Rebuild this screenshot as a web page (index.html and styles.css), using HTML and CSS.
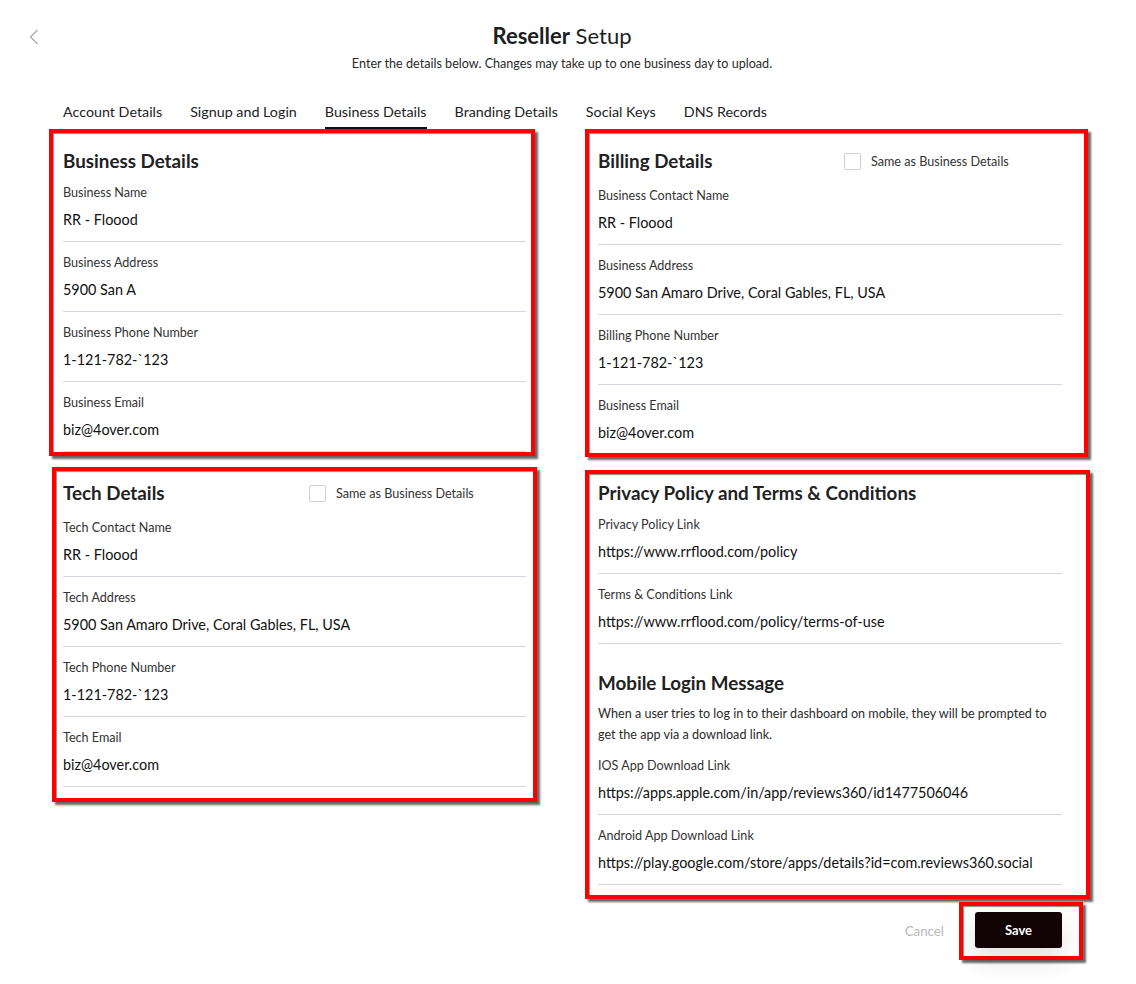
FILE: index.html
```html
<!DOCTYPE html>
<html lang="en">

<head>
    <meta charset="UTF-8">
    <meta name="viewport" content="width=device-width, initial-scale=1.0">
    <title>Reseller Setup</title>
    <link rel="stylesheet" href="styles.css">
</head>

<body>
    <div class="header">
        <a href="javascript:;" class="back">
            <svg width="10" height="16" viewBox="0 0 10 16"><polyline points="8.5,1 1.5,8 8.5,15" fill="none" stroke="#a8a8a8" stroke-width="1.2"/></svg>
        </a>
        <h1 class="title"><b>Reseller</b> Setup</h1>
        <p class="subtitle">Enter the details below. Changes may take up to one business day to upload.</p>
    </div>

    <ul class="tabs">
        <li>Account Details</li>
        <li>Signup and Login</li>
        <li class="current">Business Details</li>
        <li>Branding Details</li>
        <li>Social Keys</li>
        <li>DNS Records</li>
    </ul>

    <div class="main">
        <div class="col-left">
            <div class="box box-business">
                <h2 class="box-title">Business Details</h2>
                <div class="field">
                    <label>Business Name</label>
                    <div class="value">RR - Floood</div>
                </div>
                <div class="field">
                    <label>Business Address</label>
                    <div class="value">5900 San A</div>
                </div>
                <div class="field">
                    <label>Business Phone Number</label>
                    <div class="value">1-121-782-`123</div>
                </div>
                <div class="field">
                    <label>Business Email</label>
                    <div class="value">biz@4over.com</div>
                </div>
            </div>

            <div class="box box-tech">
                <div class="box-head">
                    <h2 class="box-title">Tech Details</h2>
                    <span class="check"><i></i>Same as Business Details</span>
                </div>
                <div class="field">
                    <label>Tech Contact Name</label>
                    <div class="value">RR - Floood</div>
                </div>
                <div class="field">
                    <label>Tech Address</label>
                    <div class="value">5900 San Amaro Drive, Coral Gables, FL, USA</div>
                </div>
                <div class="field">
                    <label>Tech Phone Number</label>
                    <div class="value">1-121-782-`123</div>
                </div>
                <div class="field">
                    <label>Tech Email</label>
                    <div class="value">biz@4over.com</div>
                </div>
            </div>
        </div>

        <div class="col-right">
            <div class="box box-billing">
                <div class="box-head">
                    <h2 class="box-title">Billing Details</h2>
                    <span class="check"><i></i>Same as Business Details</span>
                </div>
                <div class="field">
                    <label>Business Contact Name</label>
                    <div class="value">RR - Floood</div>
                </div>
                <div class="field">
                    <label>Business Address</label>
                    <div class="value">5900 San Amaro Drive, Coral Gables, FL, USA</div>
                </div>
                <div class="field">
                    <label>Billing Phone Number</label>
                    <div class="value">1-121-782-`123</div>
                </div>
                <div class="field last">
                    <label>Business Email</label>
                    <div class="value">biz@4over.com</div>
                </div>
            </div>

            <div class="box box-privacy">
                <h2 class="box-title">Privacy Policy and Terms &amp; Conditions</h2>
                <div class="field">
                    <label>Privacy Policy Link</label>
                    <div class="value">https://www.rrflood.com/policy</div>
                </div>
                <div class="field">
                    <label>Terms &amp; Conditions Link</label>
                    <div class="value">https://www.rrflood.com/policy/terms-of-use</div>
                </div>

                <h2 class="box-title sub-title">Mobile Login Message</h2>
                <p class="note">When a user tries to log in to their dashboard on mobile, they will be prompted to get the app via a download link.</p>
                <div class="field">
                    <label>IOS App Download Link</label>
                    <div class="value">https://apps.apple.com/in/app/reviews360/id1477506046</div>
                </div>
                <div class="field">
                    <label>Android App Download Link</label>
                    <div class="value">https://play.google.com/store/apps/details?id=com.reviews360.social</div>
                </div>
            </div>

            <div class="actions">
                <a href="javascript:;" class="cancel">Cancel</a>
                <div class="box box-save">
                    <a href="javascript:;" class="save">Save</a>
                </div>
            </div>
        </div>
    </div>
</body>

</html>
```

FILE: styles.css
```css
* {
    margin: 0;
    padding: 0;
    box-sizing: border-box;
}

ul,
ol {
    list-style: none;
}

body {
    width: 1136px;
    height: 984px;
    overflow: hidden;
    background-color: #fff;
    font-family: Lato, "Open Sans", sans-serif;
    color: #222;
}

a {
    text-decoration: none;
}

.header {
    position: relative;
    width: 1124px;
    padding-top: 21px;
    text-align: center;
}

.back {
    position: absolute;
    left: 29px;
    top: 29px;
    line-height: 0;
}

.title {
    font-size: 22px;
    line-height: 30px;
    font-weight: 400;
    color: #1e1e1e;
}

.title b {
    font-weight: 700;
}

.subtitle {
    margin-top: 4px;
    font-size: 12.6px;
    line-height: 18px;
    color: #2a2a2a;
}

.tabs {
    display: flex;
    gap: 28px;
    margin-top: 29px;
    padding-left: 63px;
}

.tabs li {
    font-size: 14.3px;
    line-height: 20px;
    padding-bottom: 5px;
    color: #222;
    border-bottom: 2px solid transparent;
}

.tabs li.current {
    border-bottom-color: #111;
}

.main {
    display: flex;
    padding-left: 49px;
}

.col-left {
    width: 488px;
}

.col-right {
    width: 505px;
    margin-left: 48px;
}

/* red marker frames */
.box {
    border: 4px solid #ff0000;
    box-shadow: 3px 3px 2px rgba(0, 0, 0, 0.6), inset 1px 1px 1px rgba(0, 0, 0, 0.45);
    background-color: #fff;
}

.box-business {
    width: 486px;
    padding: 17px 5px 0 10px;
}

.box-tech {
    width: 485px;
    margin: 11px 0 0 3px;
    padding: 9px 7px 11px 7px;
}

.box-billing {
    width: 503px;
    padding: 15px 22px 0 9px;
}

.box-privacy {
    width: 505px;
    margin-top: 13px;
    padding: 8px 24px 10px 9px;
}

.box-title {
    font-size: 18.8px;
    line-height: 22px;
    font-weight: 700;
    color: #222;
}

.box-head {
    display: flex;
    align-items: center;
    height: 26px;
    margin-bottom: 1px;
}

.box-head .box-title {
    width: 246px;
}

.check {
    display: flex;
    align-items: center;
    font-size: 12.6px;
    color: #333;
}

.check i {
    width: 17px;
    height: 17px;
    margin-right: 10px;
    border: 1px solid #cfcfd4;
    border-radius: 2px;
}

.field {
    padding: 12px 0 11px;
    border-bottom: 1px solid #d3d6e0;
}

.field.last {
    border-bottom: 0;
    padding-bottom: 10px;
}

.field label {
    display: block;
    font-size: 12.6px;
    line-height: 18px;
    color: #333;
}

.field .value {
    margin-top: 8px;
    font-size: 14.4px;
    line-height: 20px;
    color: #111;
}

.sub-title {
    margin-top: 28px;
}

.note {
    margin-top: 9px;
    font-size: 12.6px;
    line-height: 21px;
    color: #2a2a2a;
}

.actions {
    display: flex;
    justify-content: flex-end;
    align-items: center;
    margin: 3px 7px 0 0;
}

.cancel {
    margin-right: 15px;
    font-size: 13.3px;
    color: #b9b9b9;
}

.box-save {
    padding: 6px 17px 8px 12px;
}

.save {
    display: block;
    width: 87px;
    height: 36px;
    line-height: 36px;
    border-radius: 3px;
    background-color: #120404;
    color: #fff;
    font-size: 13px;
    font-weight: 700;
    text-align: center;
    box-shadow: 0 12px 24px rgba(0, 0, 0, 0.12);
}
```
